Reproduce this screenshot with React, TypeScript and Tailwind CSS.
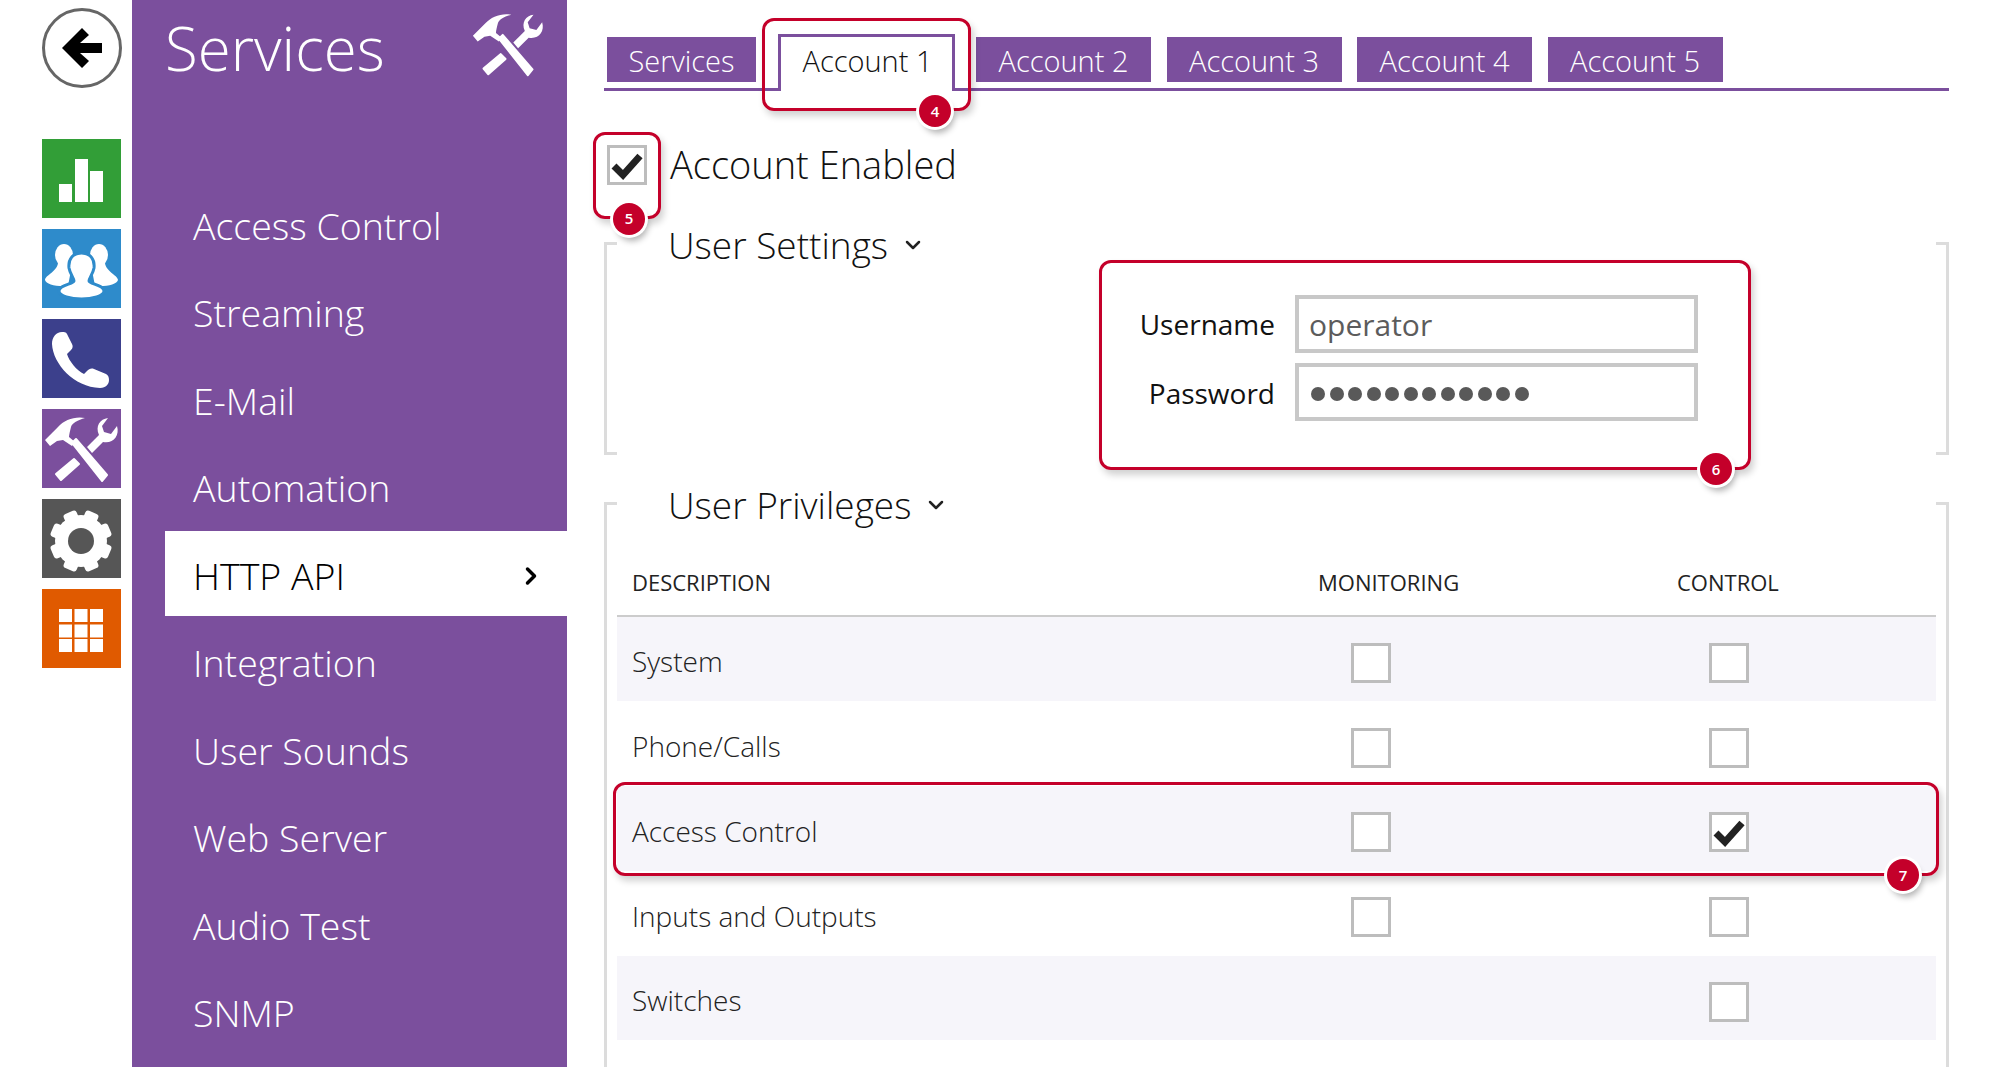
import { ChevronDown, ChevronRight } from "lucide-react";
import type { ReactNode } from "react";

const navItems = [
  "Access Control",
  "Streaming",
  "E-Mail",
  "Automation",
  "HTTP API",
  "Integration",
  "User Sounds",
  "Web Server",
  "Audio Test",
  "SNMP",
];

const accounts = ["Account 2", "Account 3", "Account 4", "Account 5"];

const privileges = [
  { name: "System", monitoring: false, control: false, shaded: true },
  { name: "Phone/Calls", monitoring: false, control: false, shaded: false },
  { name: "Access Control", monitoring: false, control: true, shaded: true, marked: true },
  { name: "Inputs and Outputs", monitoring: false, control: false, shaded: false },
  { name: "Switches", control: false, shaded: true },
];

const ToolsIcon = ({ className }: { className?: string }) => (
  <svg viewBox="0 0 79 79" fill="white" className={className}>
    <path d="M3 31 L16 18 C22 11 33 7 43 9 C36 11 30 14 29 18 C28 22 27 26 27 28 L33 33 L30 37 L21 31 L15 32 L8 37 Z" />
    <path d="M30 34 L34 30 L65 66 L60 72 Z" stroke="white" strokeWidth="2" strokeLinejoin="round" />
    <path d="M14 65 L32 50 L37 55 L19 71 Z" stroke="white" strokeWidth="2" strokeLinejoin="round" />
    <path d="M45 38 L57 26 C53 17 58 10 66 9 L60 17 L62 23 L69 25 L75 17 C78 27 71 35 61 33 L50 44 Z" />
  </svg>
);

const ChartIcon = () => (
  <svg viewBox="0 0 79 79" fill="white" className="h-full w-full">
    <rect x="17" y="45" width="13" height="18" />
    <rect x="33" y="20" width="13" height="43" />
    <rect x="48" y="32" width="13" height="31" />
  </svg>
);

const UsersIcon = () => (
  <svg viewBox="0 0 79 79" className="h-full w-full">
    <g fill="white">
      <ellipse cx="22" cy="26" rx="9" ry="11" />
      <path d="M16 32 C17 42 3 46 3 51 C4 55 14 58 26 57 L30 36 Z" />
      <ellipse cx="57" cy="26" rx="9" ry="11" />
      <path d="M63 32 C62 42 76 46 76 51 C75 55 65 58 53 57 L49 36 Z" />
    </g>
    <g fill="white" stroke="#2e8bcb" strokeWidth="3">
      <path d="M39.500 24 C31 24 26 30 27 39 C28 45 32 49 32 52 C32 55 17 56 17 62 C17 67 29 70 39.500 70 C50 70 62 67 62 62 C62 56 47 55 47 52 C47 49 51 45 52 39 C53 30 48 24 39.500 24 Z" />
    </g>
  </svg>
);

const PhoneIcon = () => (
  <svg viewBox="0 0 79 79" fill="white" className="h-full w-full">
    <path d="M20 13 C14 13 10 18 10 25 C11 45 32 68 58 69 C64 69 67 65 67 61 C67 58 66 56 64 55 L52 50 C49 49 47 50 45 52 L42 55 C35 52 27 42 25 35 L29 31 C31 29 31 27 30 25 L25 15 C24 13 22 13 20 13 Z" />
  </svg>
);

const GearIcon = () => (
  <svg viewBox="0 0 79 79" className="h-full w-full">
    <g fill="white">
      <circle cx="39" cy="42" r="26" />
      {[22.5, 67.5, 112.5, 157.5, 202.5, 247.5, 292.5, 337.5].map((angle) => (
        <rect key={angle} x="32" y="11" width="14" height="12" rx="3" transform={`rotate(${angle} 39 42)`} />
      ))}
    </g>
    <circle cx="39" cy="42" r="13" fill="#565656" />
  </svg>
);

const GridIcon = () => (
  <svg viewBox="0 0 79 79" fill="white" className="h-full w-full">
    {[17, 32.5, 48].map((x) =>
      [20, 35.5, 50].map((y) => <rect key={`${x}-${y}`} x={x} y={y} width="13" height="13" />),
    )}
  </svg>
);

const Tile = ({ color, children }: { color: string; children: ReactNode }) => (
  <div className={`h-[79px] w-[79px] ${color}`}>{children}</div>
);

const Badge = ({ n, className }: { n: number; className: string }) => (
  <span
    className={`absolute flex h-8 w-8 items-center justify-center rounded-full bg-[#c4002a] text-[15px] font-semibold text-white shadow-[0_0_0_3px_white,3px_6px_6px_rgba(0,0,0,0.3)] ${className}`}
  >
    {n}
  </span>
);

const Checkbox = ({ checked, className = "" }: { checked?: boolean; className?: string }) => (
  <span className={`block h-10 w-10 shrink-0 border-[3px] border-[#bdbdbd] bg-white ${className}`}>
    {checked && (
      <svg viewBox="0 0 34 34" className="h-full w-full">
        <path d="M4 18 L13 27 L30 8" fill="none" stroke="#222" strokeWidth="7" />
      </svg>
    )}
  </span>
);

const Highlight = ({ className, children }: { className: string; children?: ReactNode }) => (
  <div
    className={`pointer-events-none absolute rounded-[12px] border-[3px] border-[#c4002a] shadow-[3px_5px_7px_rgba(0,0,0,0.18)] ${className}`}
  >
    {children}
  </div>
);

const Bracket = ({ side }: { side: "left" | "right" }) => (
  <span
    className={`absolute inset-y-0 w-[13px] border-y-[3px] border-[#dcdcdc] ${
      side === "left" ? "left-0 border-l-[3px]" : "right-0 border-r-[3px]"
    }`}
  />
);

const SectionTitle = ({ children }: { children: string }) => (
  <h2 className="relative -mt-[21px] flex h-12 items-center pl-[64px] text-[37px] font-light text-[#111]">
    {children}
    <ChevronDown className="ml-[13px] h-6 w-6 text-[#222]" strokeWidth={2.5} />
  </h2>
);

const App = () => {
  return (
    <div className="flex h-[1067px] w-[2000px] overflow-hidden bg-white font-['Open_Sans',sans-serif] text-[#111]">
      {/* Icon rail */}
      <div className="flex w-[132px] shrink-0 flex-col pl-[42px] pt-2">
        <div className="mb-[51px] h-20 w-20 rounded-full border-[3px] border-[#666]">
          <svg viewBox="0 0 74 74" className="h-full w-full">
            <path d="M17 37 L37 17 L44 24 L35 32 L57 32 L57 42 L35 42 L44 50 L37 57 Z" fill="black" />
          </svg>
        </div>
        <div className="flex flex-col gap-[11px]">
          <Tile color="bg-[#329e37]"><ChartIcon /></Tile>
          <Tile color="bg-[#2e8bcb]"><UsersIcon /></Tile>
          <Tile color="bg-[#3c408c]"><PhoneIcon /></Tile>
          <Tile color="bg-[#7b4f9d]"><ToolsIcon className="h-full w-full" /></Tile>
          <Tile color="bg-[#565656]"><GearIcon /></Tile>
          <Tile color="bg-[#e05a00]"><GridIcon /></Tile>
        </div>
      </div>

      {/* Services menu */}
      <aside className="w-[435px] shrink-0 bg-[#7b4f9d] text-white">
        <div className="flex h-[181px] items-start justify-between pl-[33px] pr-[21px]">
          <span className="mt-[6px] text-[60px] font-light leading-[84px]">Services</span>
          <ToolsIcon className="mt-[6px] h-[76px] w-[76px]" />
        </div>
        <nav className="ml-[33px] flex flex-col gap-[2.5px]">
          {navItems.map((item) => (
            <div
              key={item}
              className={`flex h-[85px] shrink-0 items-center justify-between pl-[28px] pr-[22px] pt-[5px] text-[37.5px] font-light ${
                item === "HTTP API" ? "bg-white text-black" : ""
              }`}
            >
              {item}
              {item === "HTTP API" && <ChevronRight className="h-7 w-7" strokeWidth={3} />}
            </div>
          ))}
        </nav>
      </aside>

      {/* Settings */}
      <main className="w-[1382px] shrink-0 pl-[37px]">
        <div className="flex h-[91px] w-[1345px] items-start border-b-[3px] border-[#7b4f9d] pl-[3px] pt-[37px] text-[29px] font-light">
          <div className="flex h-[45px] w-[149px] items-center justify-center bg-[#7b4f9d] pt-[2px] text-white">Services</div>
          <div className="relative -mt-[3px] ml-[22px] mr-[21px] flex h-[57px] w-[177px] items-start justify-center border-x-[3px] border-t-[3px] border-[#7b4f9d] bg-white pl-[2px] pt-[2px] text-[#111]">
            Account 1
            <Highlight className="-left-[19px] -right-[19px] -top-[19px] -bottom-[20px]">
              <Badge n={4} className="-bottom-[19px] right-[17px]" />
            </Highlight>
          </div>
          <div className="flex gap-[15.5px]">
            {accounts.map((account) => (
              <div key={account} className="flex h-[45px] w-[175px] items-center justify-center bg-[#7b4f9d] pt-[2px] text-white">
                {account}
              </div>
            ))}
          </div>
        </div>

        <div className="mt-[54px] flex h-[39px] items-center pl-[3px]">
          <div className="relative">
            <Checkbox checked />
            <Highlight className="-left-[14px] -right-[14px] -top-[13px] -bottom-[34px]">
              <Badge n={5} className="-bottom-[19px] left-[17px]" />
            </Highlight>
          </div>
          <span className="ml-[23px] text-[38px] font-light">Account Enabled</span>
        </div>

        {/* User Settings */}
        <section className="relative mt-[58px] h-[213px] w-[1345px] flow-root">
          <Bracket side="left" />
          <Bracket side="right" />
          <SectionTitle>User Settings</SectionTitle>
          <div className="relative -mt-[9px] ml-[495px] h-[210px] w-[652px] pr-[53px] pt-[35px] text-[28px]">
            <div className="flex flex-col gap-[10px]">
              <div className="flex items-center justify-end gap-5">
                <label>Username</label>
                <div className="flex h-[58px] w-[403px] items-center border-4 border-[#c8c8c8] pl-[10px] text-[30px] text-[#5c5c5c]">
                  operator
                </div>
              </div>
              <div className="flex items-center justify-end gap-5">
                <label className="pt-[1px]">Password</label>
                <div className="flex h-[58px] w-[403px] items-center gap-[4.5px] border-4 border-[#c8c8c8] pl-[12px] pt-[4px]">
                  {Array.from({ length: 12 }, (_, i) => (
                    <span key={i} className="h-[14px] w-[14px] rounded-full bg-[#595959]" />
                  ))}
                </div>
              </div>
            </div>
            <Highlight className="inset-0">
              <Badge n={6} className="-bottom-[18px] right-[16px]" />
            </Highlight>
          </div>
        </section>

        {/* User Privileges */}
        <section className="relative mt-[46.5px] h-[700px] w-[1345px] flow-root">
          <Bracket side="left" />
          <Bracket side="right" />
          <SectionTitle>User Privileges</SectionTitle>
          <div className="mx-[13px]">
            <div className="grid h-[88px] grid-cols-[734px_358px_1fr] items-center border-b-2 border-[#ccc] pt-[21px] text-[22px] text-[#222]">
              <span className="pl-[15px]">DESCRIPTION</span>
              <span className="-ml-[33px]">MONITORING</span>
              <span className="-ml-[32px]">CONTROL</span>
            </div>
            {privileges.map((row) => (
              <div
                key={row.name}
                className={`relative grid h-[84.75px] grid-cols-[734px_358px_1fr] items-center text-[28px] font-light text-[#222] ${
                  row.shaded ? "bg-[#f6f5fa]" : ""
                }`}
              >
                <span className="pl-[15px] pt-[5px]">{row.name}</span>
                <span className="pt-[8px]">{row.monitoring !== undefined && <Checkbox checked={row.monitoring} />}</span>
                <span className="pt-[8px]"><Checkbox checked={row.control} /></span>
                {row.marked && (
                  <Highlight className="-left-[4px] -right-[3px] -top-[4px] -bottom-[5px]">
                    <Badge n={7} className="-bottom-[18px] right-[17px]" />
                  </Highlight>
                )}
              </div>
            ))}
          </div>
        </section>
      </main>
    </div>
  );
};

export default App;
